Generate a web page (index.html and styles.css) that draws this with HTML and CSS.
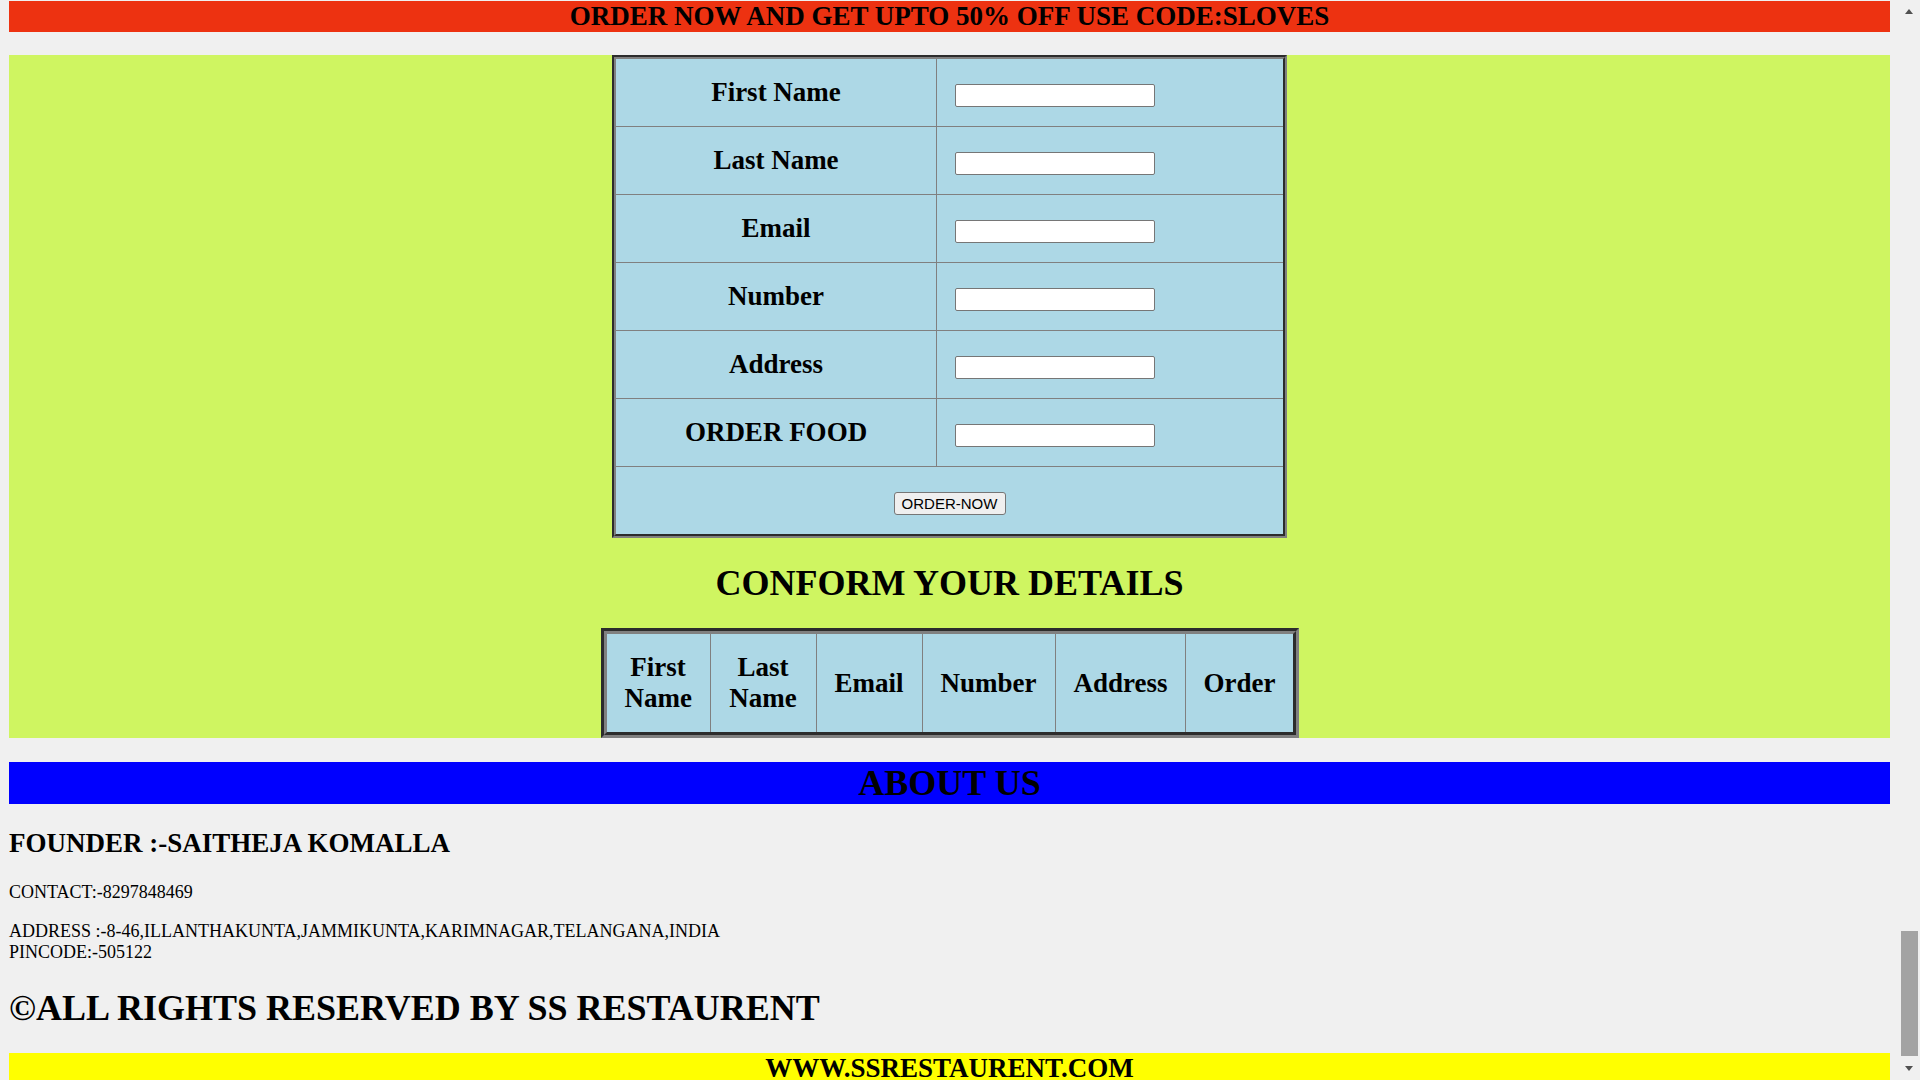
FILE: index.html
```html
<!DOCTYPE html>
<html lang="en">
<head>
<meta charset="utf-8">
<title>SS Restaurent</title>
<link rel="stylesheet" href="styles.css">
</head>
<body>
<div class="page">
  <h2 class="offer">ORDER NOW AND GET UPTO 50% OFF USE CODE:SLOVES</h2>
  <section class="order">
    <form class="order-form">
      <table class="form-table">
        <tr><th>First Name</th><td><input type="text"></td></tr>
        <tr><th>Last Name</th><td><input type="text"></td></tr>
        <tr><th>Email</th><td><input type="text"></td></tr>
        <tr><th>Number</th><td><input type="text"></td></tr>
        <tr><th>Address</th><td><input type="text"></td></tr>
        <tr><th>ORDER FOOD</th><td><input type="text"></td></tr>
        <tr><td colspan="2" class="submit-cell"><button type="button">ORDER-NOW</button></td></tr>
      </table>
    </form>
    <h1 class="confirm-title">CONFORM YOUR DETAILS</h1>
    <table class="details-table">
      <tr>
        <th class="c1">First Name</th>
        <th class="c2">Last Name</th>
        <th class="c3">Email</th>
        <th class="c4">Number</th>
        <th class="c5">Address</th>
        <th class="c6">Order</th>
      </tr>
    </table>
  </section>
  <h1 class="about">ABOUT US</h1>
  <h2 class="founder">FOUNDER :-SAITHEJA KOMALLA</h2>
  <p class="contact">CONTACT:-8297848469</p>
  <p class="address">ADDRESS :-8-46,ILLANTHAKUNTA,JAMMIKUNTA,KARIMNAGAR,TELANGANA,INDIA<br>PINCODE:-505122</p>
  <h1 class="rights">&copy;ALL RIGHTS RESERVED BY SS RESTAURENT</h1>
  <h2 class="site">WWW.SSRESTAURENT.COM</h2>
</div>
<div class="scrollbar">
  <div class="arrow-up"></div>
  <div class="thumb"></div>
  <div class="arrow-down"></div>
</div>
</body>
</html>
```
FILE: styles.css
```css
html, body {
  margin: 0;
  padding: 0;
}
body {
  background: #f0f0f0;
  color: #000;
  font-family: "Liberation Serif", "Times New Roman", serif;
  height: 1080px;
  overflow: hidden;
}
.page {
  width: 1881px;
  margin-left: 9px;
  padding-top: 1px;
}
h1 {
  font-size: 36px;
  line-height: 42px;
  font-weight: bold;
  margin: 24px 0;
}
h2 {
  font-size: 27px;
  line-height: 31px;
  font-weight: bold;
  margin: 22px 0;
}
p {
  font-size: 18px;
  line-height: 21px;
  margin: 18px 0;
}
.offer {
  background: #ed3211;
  text-align: center;
  margin: 0 0 23px;
}
.order {
  background: #cff561;
}
.order-form {
  margin: 0;
}
.form-table {
  box-sizing: border-box;
  width: 675px;
  margin: 0 auto;
  border: 4px groove #808080;
  border-spacing: 0;
  table-layout: fixed;
  background: #add8e6;
}
.form-table th,
.form-table td {
  padding: 18px;
  font-size: 27px;
  line-height: 31px;
  font-weight: bold;
  border-bottom: 1px solid #808080;
}
.form-table tr:last-child > th,
.form-table tr:last-child > td {
  border-bottom: 0;
}
.form-table th {
  box-sizing: border-box;
  width: 321px;
  border-right: 1px solid #808080;
  text-align: center;
}
.form-table td {
  text-align: left;
}
.form-table .submit-cell {
  text-align: center;
}
.form-table input {
  box-sizing: border-box;
  width: 200px;
  height: 23px;
  margin: 0;
  padding: 1px 2px;
  border: 1px solid #767676;
  border-radius: 2px;
  background: #fff;
  font: 15px "Liberation Sans", Arial, sans-serif;
  vertical-align: baseline;
}
.form-table button {
  box-sizing: border-box;
  width: 112px;
  height: 23px;
  margin: 0;
  padding: 1px 6px;
  border: 1px solid #767676;
  border-radius: 3px;
  background: #efefef;
  color: #000;
  font: 15px "Liberation Sans", Arial, sans-serif;
  vertical-align: baseline;
}
.confirm-title {
  text-align: center;
}
.details-table {
  box-sizing: border-box;
  width: 698px;
  margin: 0 auto;
  border: 6px groove #808080;
  border-spacing: 0;
  table-layout: fixed;
  background: #add8e6;
}
.details-table th {
  box-sizing: border-box;
  padding: 18px;
  font-size: 27px;
  line-height: 31px;
  font-weight: bold;
  text-align: center;
  vertical-align: middle;
  border-right: 1px solid #808080;
}
.details-table th:last-child {
  border-right: 0;
}
.details-table .c1 { width: 104px; }
.details-table .c2 { width: 106px; }
.details-table .c3 { width: 106px; }
.details-table .c4 { width: 133px; }
.details-table .c5 { width: 130px; }
.details-table .c6 { width: 107px; }
.about {
  background: #0000ff;
  text-align: center;
}
.founder {
  margin-top: 24px;
  margin-bottom: 23px;
}
.rights {
  margin-bottom: 24px;
}
.site {
  background: #ffff00;
  text-align: center;
  margin-top: 0;
}
.scrollbar {
  position: fixed;
  top: 0;
  right: 0;
  width: 21px;
  height: 1080px;
  background: #f0f0f0;
}
.thumb {
  position: absolute;
  left: 2px;
  top: 931px;
  width: 17px;
  height: 125px;
  background: #a3a3a3;
}
.arrow-up,
.arrow-down {
  position: absolute;
  left: 6px;
  width: 0;
  height: 0;
  border-left: 4.5px solid transparent;
  border-right: 4.5px solid transparent;
}
.arrow-up {
  top: 9px;
  border-bottom: 5px solid #505050;
}
.arrow-down {
  top: 1066px;
  border-top: 5px solid #505050;
}
```
